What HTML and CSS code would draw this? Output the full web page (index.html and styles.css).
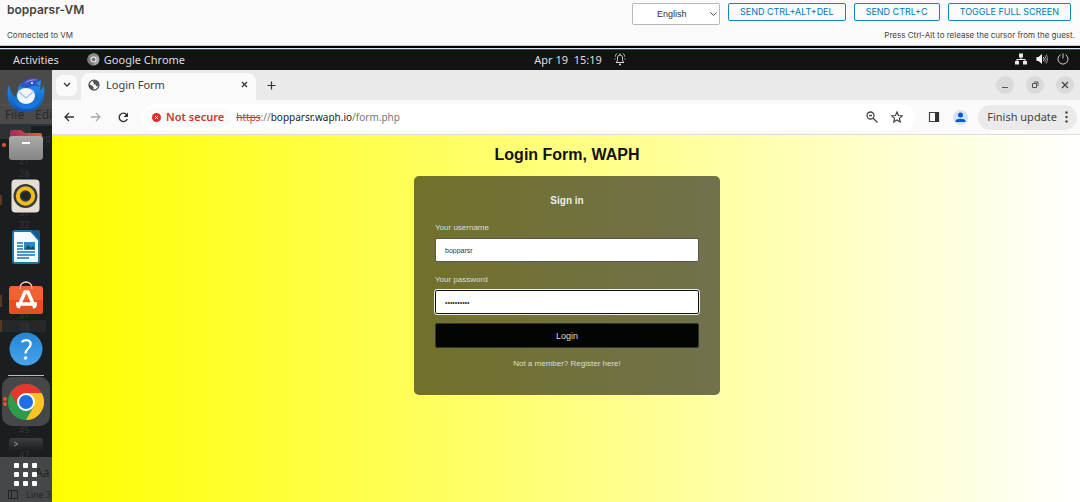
FILE: index.html
```html
<!DOCTYPE html>
<html lang="en">
<head>
<meta charset="utf-8">
<title>bopparsr-VM</title>
<link rel="stylesheet" href="styles.css">
</head>
<body>
<header class="console">
  <div class="console-info">
    <h1 class="vm-name">bopparsr-VM</h1>
    <p class="console-note">Connected to VM</p>
  </div>
  <div class="console-side">
    <div class="console-actions">
      <div class="language-box">
        <select class="language" aria-label="Keyboard language"><option>English</option></select>
        <svg class="language-arrow" width="7" height="5" viewBox="0 0 7 5" fill="none" stroke="#444"><path d="M.5 .5l3 3 3-3"/></svg>
      </div>
      <button class="console-button" type="button">SEND CTRL+ALT+DEL</button>
      <button class="console-button" type="button">SEND CTRL+C</button>
      <button class="console-button" type="button">TOGGLE FULL SCREEN</button>
    </div>
    <p class="console-note">Press Ctrl-Alt to release the cursor from the guest.</p>
  </div>
</header>

<div class="desktop">
  <div class="topbar">
    <div class="topbar-left">
      <span>Activities</span>
      <span class="app-menu">
        <svg width="13" height="13" viewBox="0 0 26 26"><circle cx="13" cy="13" r="12" fill="#a9a9a9"/><path d="M13 7h11A12 12 0 0 0 3 6l5 9z" fill="#8b8b8b"/><path d="M3 6a12 12 0 0 0 9 19l5-9H8z" fill="#777"/><circle cx="13" cy="13" r="6" fill="#f1f1f1"/><circle cx="13" cy="13" r="4" fill="#777"/></svg>
        Google Chrome
      </span>
    </div>
    <div class="topbar-center">
      <span>Apr 19&nbsp; 15:19</span>
      <svg width="12" height="14" viewBox="0 0 24 28" fill="none" stroke="#d8d8d8" stroke-width="2"><path d="M4 21c3-2 3-4 3-9 0-4 2-6 5-6s5 2 5 6c0 5 0 7 3 9zM12 3v3M3 9c0-3 1-4 3-6M21 9c0-3-1-4-3-6M2 15v-2M22 15v-2"/><path d="M10 25h4" stroke-width="3"/></svg>
    </div>
    <div class="topbar-right">
      <svg width="12" height="12" viewBox="0 0 24 24" fill="#e8e8e8"><path d="M8 1h8v8h-3v3h8v4h3v7h-8v-7h3v-2H5v2h3v7H0v-7h3v-4h8V9H8z"/></svg>
      <svg width="12" height="12" viewBox="0 0 24 24"><path d="M1 8h4l7-6v20l-7-6H1z" fill="#f4f4f4"/><path d="M15 8q3 4 0 8" fill="none" stroke="#e0e0e0" stroke-width="2"/><path d="M18 5q5 7 0 14M21 3q5 9 0 18" fill="none" stroke="#888" stroke-width="2"/></svg>
      <svg width="12" height="12" viewBox="0 0 24 24" fill="none" stroke="#d0d0d0" stroke-width="2"><path d="M12 1v10M7 3.500A10 10 0 1 0 17 3.500"/></svg>
    </div>
  </div>

  <nav class="dock" aria-label="Dock">
    <svg class="dock-backdrop" width="52" height="432" viewBox="0 0 52 432">
      <path d="M0 0h52v54H0z" fill="#4a4a4a"/><path d="M0 35h52" stroke="#555"/>
      <path d="M0 54h52v15H0z" fill="#2d3134"/><path d="M31 56h21v20H31z" fill="#1c1f21"/>
      <path d="M0 125h2v10H0zM0 225h2v12H0zM0 250h2v12H0z" fill="#58391d"/><path d="M2 250h44v12H2z" fill="#24282a"/>
      <g class="ghost-menu"><text x="5" y="49">File</text><text x="35" y="49">Edi</text></g>
      <g class="ghost-lines"><text x="40" y="71">eg</text><text x="19" y="94">27</text><text x="19" y="107">28</text><text x="19" y="146">31</text><text x="19" y="158">32</text><text x="19" y="248">37</text><text x="19" y="260">38</text><text x="19" y="313">41</text><text x="19" y="363">45</text><text x="19" y="376">46</text><text x="19" y="388">47</text></g>
    </svg>
    <a class="dock-item dock-item-first" href="#" aria-label="Thunderbird">
      <svg width="38" height="38" viewBox="0 0 38 38"><defs><linearGradient id="tb" x2="0" y2="1"><stop stop-color="#2797ee"/><stop offset="1" stop-color="#0b55bd"/></linearGradient></defs><path d="M2 9c-4 12 1 22 8 25 4 2 14 2 19-1 8-5 9-15 8-24-1 3-2 4-4 5l1-10-5 3c-5-3-11-3-15 1-3 2-3 5-3 8-2 1-2 3-2 5-4-2-6-6-7-12z" fill="url(#tb)"/><path d="M13 11C15 4 23 0 33 4l-4 3 4 4c-4-1-8-1-12 1z" fill="#2b56c8"/><path d="M17 8c3-4 9-6 14-4-5 0-9 1-14 4z" fill="#a57be8"/><circle cx="25" cy="7" r="1" fill="#fff"/><ellipse cx="19" cy="20" rx="9" ry="8" fill="#f2f6fc"/><path d="M11 15l8 7 8-7" fill="none" stroke="#a9c3e8" stroke-width="1.500"/><path d="M7 19c1 8 7 10 14 9 6-1 10-4 12-10 1 9-4 15-13 15S6 27 7 19z" fill="#1878de"/></svg>
    </a>
    <a class="dock-item dock-item-open" href="#" aria-label="Files">
      <svg width="34" height="32" viewBox="0 0 34 32"><defs><linearGradient id="fd"><stop stop-color="#a9275f"/><stop offset="1" stop-color="#ef5d2e"/></linearGradient><linearGradient id="fb" x2="0" y2="1"><stop stop-color="#aaa"/><stop offset="1" stop-color="#858585"/></linearGradient></defs><path d="M1 3q0-2 2-2h9l4 3h15q2 0 2 2v12H1z" fill="url(#fd)"/><rect y="7" width="34" height="24" rx="3" fill="url(#fb)"/><path d="M13 14h8" stroke="#fff" stroke-width="2"/></svg>
    </a>
    <a class="dock-item" href="#" aria-label="Rhythmbox">
      <svg width="29" height="34" viewBox="0 0 29 34"><rect x=".5" y=".5" width="28" height="33" rx="4" fill="#e5ded2"/><circle cx="14.500" cy="17" r="12" fill="#343b40"/><circle cx="14.500" cy="17" r="7.700" fill="none" stroke="#f5bd17" stroke-width="4"/><circle cx="14.500" cy="17" r="4" fill="#20272b"/></svg>
    </a>
    <a class="dock-item" href="#" aria-label="LibreOffice Writer">
      <svg width="28" height="34" viewBox="0 0 28 34"><path d="M3 1h16l8 9v21q0 2-2 2H3q-2 0-2-2V3q0-2 2-2z" fill="#f6fbff" stroke="#1b76ad" stroke-width="2"/><path d="M19 0h7q2 0 2 2v9z" fill="#155b8b"/><path d="M5 13h6M5 16h6M5 19h6M5 22h18M5 25h18M5 28h12" stroke="#1874b1" stroke-width="1.500"/><path d="M12 12h11v8H12z" fill="#2689c9"/><path d="M13 19l3-4 3 3 2-2 2 3z" fill="#104b78"/></svg>
    </a>
    <a class="dock-item dock-item-tall" href="#" aria-label="Software">
      <svg width="34" height="34" viewBox="0 0 34 34"><path d="M11 7c0-8 12-8 12 0" fill="none" stroke="#d8cfa0" stroke-width="1.500"/><rect y="5" width="34" height="28" rx="3" fill="#ef6232"/><path d="M0 19h34v11q0 3-3 3H3q-3 0-3-3z" fill="#e4501f"/><path d="M11 8c0-9 12-9 12 0" fill="none" stroke="#e6d9b0"/><path d="M9 27l7-16h3l7 16M7 23h21" fill="none" stroke="#fff" stroke-width="3.500"/></svg>
    </a>
    <a class="dock-item" href="#" aria-label="Help">
      <svg width="34" height="34" viewBox="0 0 34 34"><defs><linearGradient id="hp" x2="0" y2="1"><stop stop-color="#2585d5"/><stop offset="1" stop-color="#47a4ec"/></linearGradient></defs><circle cx="17" cy="17" r="16.500" fill="url(#hp)"/><path d="M12.500 10c5-4 10-1 9 3-1 4-5 4-5 8.500" fill="none" stroke="#fff" stroke-width="2.200"/><circle cx="16.500" cy="26" r="1.800" fill="#fff"/></svg>
    </a>
    <div class="dock-rule"></div>
    <a class="dock-item dock-item-active" href="#" aria-label="Google Chrome">
      <svg width="36" height="36" viewBox="0 0 36 36"><circle cx="18" cy="18" r="18" fill="#2e9b4c"/><path d="M2.400 9A18 18 0 0 1 33.600 9H18l-7.800 13.500z" fill="#e2382d"/><path d="M33.600 9A18 18 0 0 1 18 36l7.800-13.500L18 9z" fill="#fbc423"/><circle cx="18" cy="18" r="9" fill="#fff"/><circle cx="18" cy="18" r="7" fill="#1f6ee8"/></svg>
    </a>
    <a class="dock-terminal" href="#" aria-label="Terminal">
      <svg width="34" height="12" viewBox="0 0 34 12"><defs><linearGradient id="tm" x2="0" y2="1"><stop stop-color="#3c3e3f"/><stop offset="1" stop-color="#1e2123"/></linearGradient></defs><path d="M0 12V3q0-3 3-3h28q3 0 3 3v9z" fill="url(#tm)"/><path d="M5 4l4 2-4 2" fill="none" stroke="#888"/></svg>
    </a>
    <button class="app-grid" type="button" aria-label="Show applications">
      <svg width="52" height="45" viewBox="0 0 52 45"><g class="ghost-status"><text x="35" y="20">Aa</text><text class="ghost-small" x="26" y="41">Line 3</text></g><path d="M8.500 33.500h9v8h-9zM11.500 33.500v8" fill="none" stroke="#222"/><g fill="#fff"><rect x="14" y="6" width="5" height="5" rx="1"/><rect x="23" y="6" width="5" height="5" rx="1"/><rect x="32" y="6" width="5" height="5" rx="1"/><rect x="14" y="15" width="5" height="5" rx="1"/><rect x="23" y="15" width="5" height="5" rx="1"/><rect x="32" y="15" width="5" height="5" rx="1"/><rect x="14" y="24" width="5" height="5" rx="1"/><rect x="23" y="24" width="5" height="5" rx="1"/><rect x="32" y="24" width="5" height="5" rx="1"/></g></svg>
    </button>
  </nav>

  <div class="browser">
    <div class="tabstrip">
      <button class="tab-search" type="button" aria-label="Search tabs"><svg width="8" height="6" viewBox="0 0 8 6" fill="none" stroke="#333" stroke-width="1.300"><path d="M1 1l3 3 3-3"/></svg></button>
      <div class="tab">
        <svg width="12" height="12" viewBox="0 0 24 24"><circle cx="12" cy="12" r="10" fill="#fff" stroke="#51565b" stroke-width="2.500"/><path d="M2 10l6 3 3 3v6C5 22 0 16 2 10zM12 2L9 6l3 2-1 3h4l2 4 4-1c3-6-1-12-9-12z" fill="#51565b"/></svg>
        <span class="tab-title">Login Form</span>
        <button class="plain" type="button" aria-label="Close tab"><svg width="7" height="7" viewBox="0 0 7 7" stroke="#333" stroke-width="1.300"><path d="M1 1l5 5M6 1L1 6"/></svg></button>
      </div>
      <button class="plain new-tab" type="button" aria-label="New tab"><svg width="9" height="9" viewBox="0 0 9 9" stroke="#333" stroke-width="1.200"><path d="M4.500 .5v8M.5 4.500h8"/></svg></button>
      <div class="window-controls">
        <button class="window-button" type="button" aria-label="Minimize"><svg width="8" height="8" viewBox="0 0 8 8" stroke="#555"><path d="M1 6.500h6"/></svg></button>
        <button class="window-button" type="button" aria-label="Restore"><svg width="8" height="8" viewBox="0 0 8 8" fill="none" stroke="#555"><path d="M1.500 2.500h4v4h-4zM3 1h4v4"/></svg></button>
        <button class="window-button" type="button" aria-label="Close"><svg width="8" height="8" viewBox="0 0 8 8" stroke="#444" stroke-width="1.200"><path d="M1 1l6 6M7 1L1 7"/></svg></button>
      </div>
    </div>
    <div class="toolbar">
      <div class="history">
        <button class="plain" type="button" aria-label="Back"><svg width="10" height="10" viewBox="0 0 10 10" fill="none" stroke="#333" stroke-width="1.300"><path d="M10 5H1M5 1L1 5l4 4"/></svg></button>
        <button class="plain" type="button" aria-label="Forward"><svg width="10" height="10" viewBox="0 0 10 10" fill="none" stroke="#aaa" stroke-width="1.300"><path d="M0 5h9M5 1l4 4-4 4"/></svg></button>
        <button class="plain" type="button" aria-label="Reload"><svg width="11" height="11" viewBox="0 0 11 11"><path d="M9.300 7A4.200 4.200 0 1 1 8.800 2.800" fill="none" stroke="#333" stroke-width="1.400"/><path d="M10 .5V5H5.500z" fill="#333"/></svg></button>
      </div>
      <div class="address">
        <span class="security"><svg width="9" height="9" viewBox="0 0 9 9"><circle cx="4.500" cy="4.500" r="4.500" fill="#d3332b"/><path d="M3 3l3 3M6 3L3 6" stroke="#fff"/></svg><span class="bar-text">Not secure</span></span>
        <span class="url bar-text"><del>https</del>://<b>bopparsr.waph.io</b>/form.php</span>
        <button class="plain" type="button" aria-label="Zoom"><svg width="12" height="12" viewBox="0 0 12 12" fill="none" stroke="#444" stroke-width="1.300"><circle cx="4.500" cy="4.500" r="3.500"/><path d="M7 7l4.500 4.500M3 4.500h3"/></svg></button>
        <button class="plain" type="button" aria-label="Bookmark"><svg width="12" height="12" viewBox="0 0 24 24" fill="none" stroke="#444" stroke-width="2.400"><path d="M12 2l3 7 7.500.7-5.700 5 1.700 7.300L12 18l-6.500 4 1.700-7.300-5.700-5L9 9z"/></svg></button>
      </div>
      <div class="toolbar-actions">
        <button class="plain" type="button" aria-label="Side panel"><svg width="12" height="12" viewBox="0 0 12 12"><path d="M1.500 1.500h9v9h-9z" fill="#fff" stroke="#444" stroke-width="1.200"/><path d="M7 1h4v10H7z" fill="#333"/></svg></button>
        <button class="plain" type="button" aria-label="Profile"><svg width="15" height="15" viewBox="0 0 15 15"><circle cx="7.500" cy="7.500" r="7.500" fill="#d3e3fd"/><circle cx="7.500" cy="5" r="2.500" fill="#0b57d0"/><path d="M2.500 12v-1c0-3 10-3 10 0v1z" fill="#0b57d0"/></svg></button>
        <button class="update" type="button"><span class="bar-text">Finish update</span><svg width="3" height="12" viewBox="0 0 3 12" fill="#444"><circle cx="1.500" cy="1.500" r="1.200"/><circle cx="1.500" cy="6" r="1.200"/><circle cx="1.500" cy="10.500" r="1.200"/></svg></button>
      </div>
    </div>

    <main class="page">
      <h2 class="page-title">Login Form, WAPH</h2>
      <form class="login">
        <h3 class="login-title">Sign in</h3>
        <label class="field-label" for="username">Your username</label>
        <input class="field" id="username" type="text" value="bopparsr">
        <label class="field-label" for="password">Your password</label>
        <input class="field field-focused" id="password" type="password" value="xxxxxxxxxx">
        <button class="login-button" type="button">Login</button>
        <p class="register">Not a member? <a class="register-link" href="#">Register here!</a></p>
      </form>
    </main>
  </div>
</div>
</body>
</html>
```

FILE: styles.css
```css
* { box-sizing: border-box; }
body {
  margin: 0;
  min-height: 100vh;
  display: flex;
  flex-direction: column;
  font-family: "Liberation Sans", Arial, sans-serif;
}
h1, h2, h3, p { margin: 0; }
button, input, select { font: inherit; margin: 0; }
svg { display: block; flex: none; }
a { color: inherit; text-decoration: none; }
.plain { border: 0; padding: 0; background: none; }

/* Remote console header */
.console {
  display: flex;
  justify-content: space-between;
  height: 48px;
  padding: 3px 5px 0 7px;
  background: #fafafa;
  border-bottom: 2px solid #000;
  box-shadow: inset 0 -1px #ccc;
  font-family: Inter, sans-serif;
  color: #454545;
}
.console-info, .console-side {
  display: flex;
  flex-direction: column;
  justify-content: space-between;
  padding-bottom: 5px;
}
.console-side { align-items: flex-end; }
.vm-name { font-size: 12px; line-height: 14px; font-weight: 600; }
.console-note { font-size: 8px; line-height: 12px; }
.console-actions { display: flex; gap: 8px; align-items: flex-start; padding-right: 4px; }
.language-box { position: relative; }
.language {
  display: block;
  appearance: none;
  width: 88px;
  height: 22px;
  padding: 0 16px 0 24px;
  border: 1px solid #b8b8b8;
  border-radius: 2px;
  background: #fff;
  color: #333;
  font-family: "Liberation Sans", Arial, sans-serif;
  font-size: 9px;
}
.language-arrow { position: absolute; top: 9px; right: 3px; pointer-events: none; }
.console-button {
  height: 18px;
  padding: 0 11px;
  border: 1px solid #1583bd;
  border-radius: 2px;
  background: #fafafa;
  color: #0079b8;
  font-size: 9px;
  line-height: 16px;
}

/* Guest desktop */
.desktop {
  flex: 1;
  display: grid;
  grid-template-columns: 52px 1fr;
  grid-template-rows: auto 1fr;
  border-top: 1px solid #dfe8f5;
  font-family: "Noto Sans", sans-serif;
}
.topbar {
  grid-column: 1 / -1;
  display: grid;
  grid-template-columns: 1fr auto 1fr;
  align-items: center;
  height: 21px;
  padding: 0 11px 2px 13px;
  border-top: 1px solid #1650b0;
  background: #131313;
  color: #dedede;
  font-size: 11px;
}
.topbar-left, .topbar-center, .topbar-right, .app-menu { display: flex; align-items: center; }
.topbar-left { gap: 28px; }
.app-menu { gap: 4px; }
.topbar-center { gap: 12px; padding-left: 78px; }
.topbar-right { justify-content: flex-end; gap: 9px; }

/* Dock */
.dock {
  position: relative;
  display: flex;
  flex-direction: column;
  align-items: center;
  padding-right: 1px;
  background: #1b1e20;
}
.dock-backdrop { position: absolute; top: 0; left: 0; }
.ghost-menu { font-size: 12px; fill: #292929; }
.ghost-lines { font-size: 9px; fill: #34383a; }
.ghost-status { font-size: 12px; fill: #242424; }
.ghost-small { font-size: 9px; }
.dock-item {
  position: relative;
  display: flex;
  align-items: center;
  justify-content: center;
  width: 100%;
  height: 51px;
}
.dock-item-first { height: 49px; }
.dock-item-open::before, .dock-item-active::before {
  content: "";
  position: absolute;
  left: 2px;
  width: 4px;
  height: 4px;
  border-radius: 50%;
  background: #e95420;
}
.dock-item-active::before { left: 1px; top: 20px; box-shadow: 0 5px #e95420; }
.dock-rule { position: relative; width: 36px; height: 1px; margin: 1px 0; background: #bbb; }
.dock-item-active { width: 48px; height: 49px; border-radius: 10px; background: #454748; }
.dock-terminal { position: relative; flex: 1; display: flex; align-items: flex-end; padding-bottom: 7px; }
.app-grid { position: relative; align-self: flex-start; width: 52px; height: 45px; padding: 0; border: 0; background: #454748; font-family: inherit; }

/* Browser window */
.browser { display: flex; flex-direction: column; min-width: 0; background: #fafafa; color: #3b3b3b; font-size: 11px; }
.tabstrip { display: flex; align-items: center; height: 30px; padding: 0 6px 0 4px; background: #eaeaea; }
.tab-search { display: grid; place-items: center; width: 21px; height: 21px; padding: 0; border: 0; border-radius: 6px; background: #fafafa; }
.tab {
  align-self: flex-end;
  display: flex;
  align-items: center;
  gap: 6px;
  width: 175px;
  height: 27px;
  margin-left: 4px;
  padding: 0 8px 4px 7px;
  border-radius: 8px 8px 0 0;
  background: #fafafa;
}
.tab-title { flex: 1; }
.new-tab { margin-left: 11px; }
.window-controls { display: flex; gap: 12px; margin-left: auto; }
.window-button { display: grid; place-items: center; width: 18px; height: 18px; padding: 0; border: 0; border-radius: 50%; background: #dadada; }
.toolbar { display: flex; align-items: center; height: 35px; padding: 0 3px 0 12px; border-bottom: 1px solid #ddd; }
.bar-text { padding-bottom: 1px; }
.history { display: flex; align-items: center; gap: 17px; }
.address {
  flex: 1;
  display: flex;
  align-items: center;
  gap: 13px;
  height: 27px;
  margin: 0 13px 0 13px;
  padding: 0 12px 0 2px;
  border-radius: 14px;
  background: #fff;
}
.security {
  display: flex;
  align-items: center;
  gap: 5px;
  height: 19px;
  padding: 0 8px;
  border-radius: 10px;
  background: #fafafa;
  color: #d3332b;
  font-weight: 600;
}
.url { flex: 1; margin-left: -9px; color: #777; font-size: 10px; }
.url del { color: #d3332b; }
.url b { font-weight: 400; color: #222; }
.toolbar-actions { display: flex; align-items: center; gap: 13px; }
.update {
  display: flex;
  align-items: center;
  gap: 8px;
  height: 25px;
  margin-left: -3px;
  padding: 0 9px;
  border: 0;
  border-radius: 13px;
  background: #eaeaea;
  color: #444;
}

/* Login page */
.page {
  flex: 1;
  display: flex;
  flex-direction: column;
  align-items: center;
  padding: 10px 20px 20px 22px;
  background: linear-gradient(to right, #ff0, #fff);
  font-family: "Liberation Sans", Arial, sans-serif;
}
.page-title { margin-bottom: 11px; font-size: 16px; line-height: 20px; color: #111; }
.login {
  display: flex;
  flex-direction: column;
  width: 100%;
  max-width: 306px;
  padding: 19px 21px 25px;
  border-radius: 5px;
  background: rgba(2, 2, 8, .56);
  color: #ececec;
  font-size: 9px;
}
.login-title { margin-bottom: 15px; text-align: center; font-size: 10px; line-height: 12px; }
.field-label { margin-bottom: 4px; font-size: 8px; line-height: 12px; color: #ddd; }
.field {
  width: 100%;
  height: 24px;
  margin-bottom: 12px;
  padding: 0 9px;
  border: 1px solid #555;
  border-radius: 2px;
  background: #fff;
  color: #333;
  font-size: 7px;
}
.field-focused { margin-bottom: 9px; border-color: #111; outline: 1px solid #eee; }
.login-button { height: 25px; padding: 0; border: 1px solid #333; border-radius: 2px; background: #020602; color: #ddd; }
.register { margin-top: 10px; text-align: center; font-size: 8px; line-height: 12px; color: #ddd; }
```
